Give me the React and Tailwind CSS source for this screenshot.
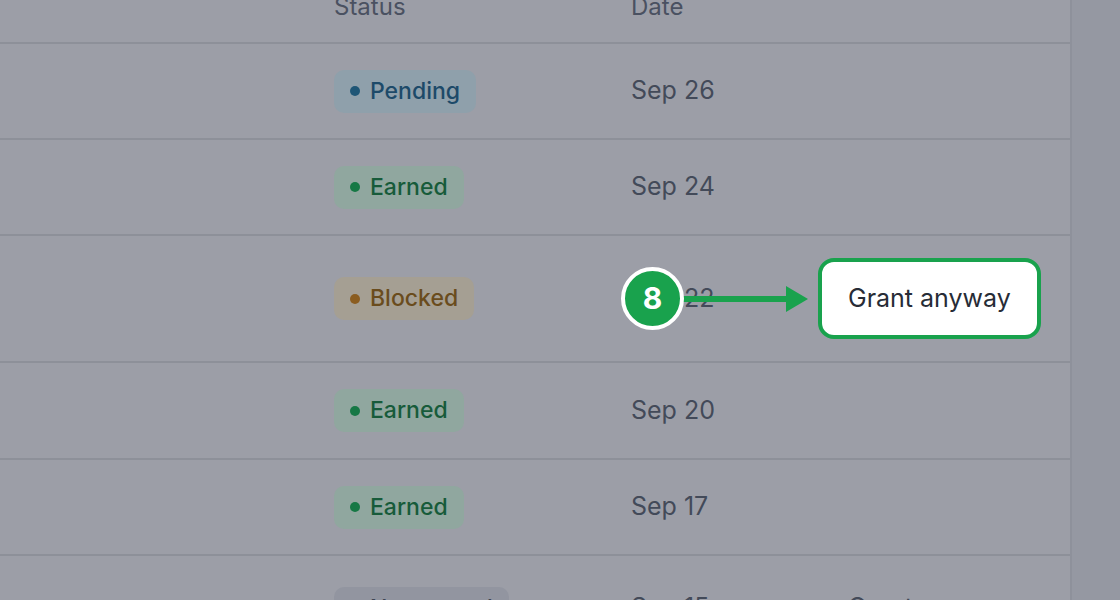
const rows = [
  { status: "Pending", date: "Sep 26", h: "h-[96px]" },
  { status: "Earned", date: "Sep 24", h: "h-[96px]" },
  { status: "Blocked", date: "Sep 22", h: "h-[127px]", action: "highlight" },
  { status: "Earned", date: "Sep 20", h: "h-[97px]" },
  { status: "Earned", date: "Sep 17", h: "h-[96px]" },
  { status: "Not earned", date: "Sep 15", h: "h-[106px]", action: "dim" },
];

const badgeStyles = {
  Pending: { box: "bg-[#8fa0ab]", text: "text-[#1d4a69]", dot: "bg-[#1f5676]" },
  Earned: { box: "bg-[#90a79f]", text: "text-[#175b3a]", dot: "bg-[#167845]" },
  Blocked: { box: "bg-[#a59f93]", text: "text-[#6a4c1d]", dot: "bg-[#8b5d20]" },
  "Not earned": { box: "bg-[#9295a0]", text: "text-[#3f4553]", dot: "bg-[#4b5160]" },
};

function Badge({ status }) {
  const s = badgeStyles[status];
  return (
    <span className={`inline-flex items-center h-[43px] pl-4 pr-[16px] gap-[10px] rounded-[10px] ${s.box}`}>
      <span className={`w-[10px] h-[10px] rounded-full ${s.dot}`} />
      <span className={`text-[23px] leading-none font-medium ${s.text}`}>{status}</span>
    </span>
  );
}

function Callout() {
  return (
    <div className="absolute left-[621px] top-[267px] flex items-center">
      <div className="w-[63px] h-[63px] rounded-full bg-[#19a24d] border-[4px] border-white flex items-center justify-center text-white text-[30px] font-bold relative z-10">
        8
      </div>
      <div className="w-[105px] h-[6px] bg-[#19a24d] -ml-[2px]" />
      <svg width="22" height="26" viewBox="0 0 22 26" className="-ml-[1px]">
        <polygon points="0,0 22,13 0,26" fill="#19a24d" />
      </svg>
    </div>
  );
}

export default function App() {
  return (
    <div className="relative w-[1120px] h-[600px] overflow-hidden flex bg-[#9598a2] font-['Inter','Liberation_Sans',sans-serif]">
      <div className="w-[1072px] shrink-0 bg-[#9c9ea7] border-r-2 border-[#8e919b]">
        <div className="h-[44px] border-b-2 border-[#8d9099] flex items-end pb-[21px] text-[24px] leading-[28px] text-[#4a5161]">
          <div className="w-[334px]" />
          <div className="w-[297px]">Status</div>
          <div>Date</div>
        </div>
        {rows.map((r, i) => (
          <div key={i} className={`${r.h} border-b-2 border-[#8d9099] flex items-center`}>
            <div className="w-[334px]" />
            <div className="w-[297px]">
              <Badge status={r.status} />
            </div>
            <div className="w-[187px] text-[25px] text-[#434a59]">{r.date}</div>
            {r.action === "highlight" && (
              <div className="h-[81px] px-[26px] flex items-center bg-white border-[4px] border-[#19a24d] rounded-[16px] text-[25px] text-[#272c36]">
                Grant anyway
              </div>
            )}
            {r.action === "dim" && (
              <div className="pl-[30px] text-[25px] text-[#434a59]">Grant anyway</div>
            )}
          </div>
        ))}
      </div>
      <div className="flex-1" />
      <Callout />
    </div>
  );
}
